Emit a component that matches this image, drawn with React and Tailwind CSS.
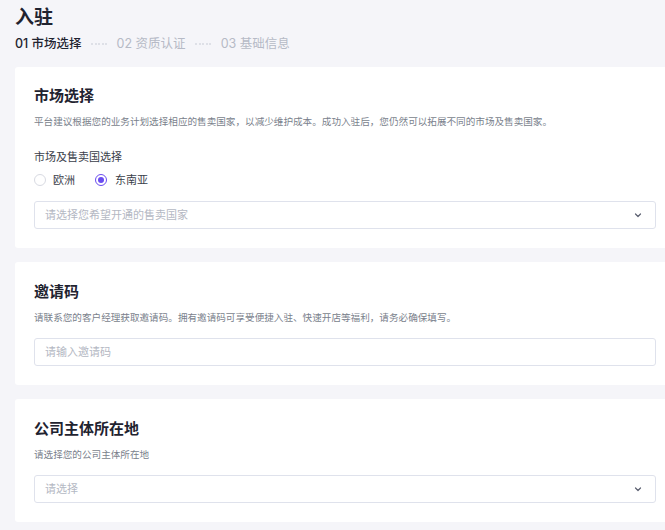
import React from "react";

const font = { fontFamily: '"Inter", "Noto Sans CJK SC", sans-serif' };

function Chevron() {
  return (
    <svg width="10" height="10" viewBox="0 0 10 10" fill="none" className="shrink-0">
      <path d="M2.5 4 L5 6.5 L7.5 4" stroke="#5b6070" strokeWidth="1.2" strokeLinecap="round" strokeLinejoin="round" />
    </svg>
  );
}

function Card({ title, desc, children, className = "" }) {
  return (
    <div className={"bg-white rounded-[3px] pl-[19px] pr-[19px] " + className}>
      <div className="text-[15px] font-semibold text-[#1f2330] leading-[20px]">{title}</div>
      <div className="mt-[9px] text-[9.6px] text-[#7a7f8c] leading-[14px]">{desc}</div>
      {children}
    </div>
  );
}

function Field({ placeholder, select }) {
  return (
    <div className="h-[28px] border border-[#dfe2ec] rounded-[3px] flex items-center justify-between pl-[10px] pr-[12px]">
      <span className="text-[11px] text-[#b4b8c3]">{placeholder}</span>
      {select && <Chevron />}
    </div>
  );
}

// dotted connector between steps
function Dots() {
  return (
    <span className="flex items-center gap-[1.5px] mx-[9.5px]">
      <span className="w-[2px] h-[2px] rounded-full bg-[#d6d9e1]" />
      <span className="w-[2px] h-[2px] rounded-full bg-[#d6d9e1]" />
      <span className="w-[2px] h-[2px] rounded-full bg-[#d6d9e1]" />
      <span className="w-[2px] h-[2px] rounded-full bg-[#d6d9e1]" />
      <span className="w-[2px] h-[2px] rounded-full bg-[#d6d9e1]" />
    </span>
  );
}

export default function App() {
  return (
    <div className="w-[665px] h-[530px] overflow-hidden bg-[#f5f5f9]" style={font}>
      <div className="w-[690px] pl-[15px] pr-[15px] pt-[5px]">
        <div className="text-[19px] font-semibold text-[#1f2330] leading-[26px]">入驻</div>
        <div className="mt-[4px] flex items-center text-[12.5px] leading-[18px]">
          <span className="text-[#1f2330] font-medium">01 市场选择</span>
          <Dots />
          <span className="text-[#b6bac6]">02 资质认证</span>
          <Dots />
          <span className="text-[#b6bac6]">03 基础信息</span>
        </div>

        <Card title="市场选择" desc="平台建议根据您的业务计划选择相应的售卖国家，以减少维护成本。成功入驻后，您仍然可以拓展不同的市场及售卖国家。" className="mt-[14px] pt-[19px] pb-[19px]">
          <div className="mt-[20px] text-[11px] text-[#3a3e4a] leading-[16px]">市场及售卖国选择</div>
          <div className="mt-[7px] flex items-center text-[11px] text-[#3a3e4a] leading-[16px]">
            <span className="w-[12px] h-[12px] rounded-full border border-[#d8dae2] bg-white" />
            <span className="ml-[7px]">欧洲</span>
            <span className="ml-[20px] w-[12px] h-[12px] rounded-full border border-[#6a4cf0] flex items-center justify-center">
              <span className="w-[6px] h-[6px] rounded-full bg-[#6a4cf0]" />
            </span>
            <span className="ml-[8px]">东南亚</span>
          </div>
          <div className="mt-[13px]">
            <Field placeholder="请选择您希望开通的售卖国家" select />
          </div>
        </Card>

        <Card title="邀请码" desc="请联系您的客户经理获取邀请码。拥有邀请码可享受便捷入驻、快速开店等福利，请务必确保填写。" className="mt-[14px] pt-[20px] pb-[19px]">
          <div className="mt-[13px]">
            <Field placeholder="请输入邀请码" />
          </div>
        </Card>

        <Card title="公司主体所在地" desc="请选择您的公司主体所在地" className="mt-[14px] pt-[20px] pb-[19px]">
          <div className="mt-[13px]">
            <Field placeholder="请选择" select />
          </div>
        </Card>
      </div>
    </div>
  );
}
